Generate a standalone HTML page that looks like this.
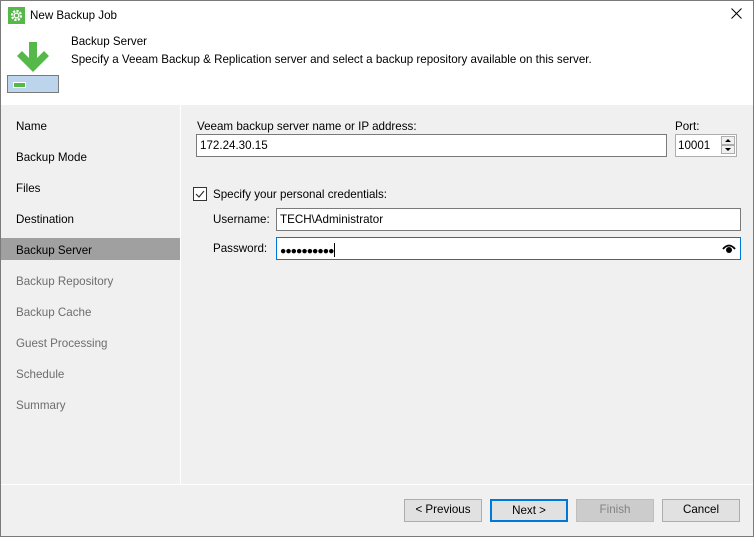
<!DOCTYPE html>
<html><head><meta charset="utf-8"><style>
*{margin:0;padding:0;box-sizing:border-box}
body{width:754px;height:537px;overflow:hidden;font-family:"Liberation Sans",sans-serif;font-size:11.6px;color:#000;background:#f0f0f0;position:relative}
.frame{position:absolute;left:0;top:0;width:754px;height:537px;border:1px solid #7a7a7a;pointer-events:none;z-index:5}
.title{position:absolute;left:0;top:0;width:754px;height:105px;background:#fff}
.abs{position:absolute;white-space:nowrap}
.left{position:absolute;left:0;top:105px;width:181px;height:379px;background:#f0f0f0;border-right:1px solid #fff}
.item{position:absolute;left:16px}
.sel{position:absolute;left:0;top:133px;width:180px;height:22px;background:#a0a0a0}
.input{position:absolute;background:#fff;border:1px solid #7a7a7a;height:23px;padding:4px 0 0 3px}
.btn{position:absolute;top:499px;width:78px;height:23px;border:1px solid #adadad;background:#e1e1e1;text-align:center;line-height:20px}
</style></head><body>
<div class="frame"></div>
<div class="title"></div>
<svg class="abs" style="left:8px;top:7px" width="17" height="17" viewBox="0 0 17 17"><rect width="17" height="17" fill="#54b948"/><circle cx="8.5" cy="8.5" r="4.5" fill="none" stroke="#fff" stroke-width="2.2" stroke-dasharray="2.2 1.3"/><circle cx="8.5" cy="8.5" r="2.3" fill="none" stroke="#fff" stroke-width="1.3"/></svg>
<div class="abs" style="left:30px;top:9px">New Backup Job</div>
<svg class="abs" style="left:731px;top:8px" width="11" height="11" viewBox="0 0 11 11"><path d="M0.5 0.5L10.5 10.5M10.5 0.5L0.5 10.5" stroke="#000" stroke-width="1"/></svg>
<div class="abs" style="left:71px;top:35px">Backup Server</div>
<div class="abs" style="left:71px;top:53px">Specify a Veeam Backup &amp; Replication server and select a backup repository available on this server.</div>
<svg class="abs" style="left:17px;top:42px" width="32" height="30" viewBox="0 0 32 30"><path d="M12 0h8v16l7-7 5 5-16 16L0 14l5-5 7 7z" fill="#54b948"/></svg>
<div class="abs" style="left:7px;top:75px;width:52px;height:18px;border:1px solid #7a7a7a;background:#bcd4ec"><div style="position:absolute;left:5px;top:6px;width:11px;height:4px;background:#54b948;border:1px solid #fff;box-sizing:content-box"></div></div>

<div class="left">
<div class="sel"></div>
<div class="item" style="top:15px">Name</div>
<div class="item" style="top:46px">Backup Mode</div>
<div class="item" style="top:77px">Files</div>
<div class="item" style="top:108px">Destination</div>
<div class="item" style="top:139px">Backup Server</div>
<div class="item" style="top:170px;color:#6d6d6d">Backup Repository</div>
<div class="item" style="top:201px;color:#6d6d6d">Backup Cache</div>
<div class="item" style="top:232px;color:#6d6d6d">Guest Processing</div>
<div class="item" style="top:263px;color:#6d6d6d">Schedule</div>
<div class="item" style="top:294px;color:#6d6d6d">Summary</div>
</div>

<div class="abs" style="left:197px;top:120px">Veeam backup server name or IP address:</div>
<div class="input" style="left:196px;top:134px;width:471px">172.24.30.15</div>
<div class="abs" style="left:675px;top:120px">Port:</div>
<div class="input" style="left:675px;top:134px;width:62px;border-color:#adadad;padding-left:2px">10001</div>
<svg class="abs" style="left:721px;top:136px" width="14" height="19" viewBox="0 0 14 19"><rect x="0.5" y="0.5" width="13" height="8" fill="#f0f0f0" stroke="#adadad"/><rect x="0.5" y="9.5" width="13" height="8" fill="#f0f0f0" stroke="#adadad"/><path d="M4 6l3-3 3 3z M4 12l3 3 3-3z" fill="#000"/></svg>

<svg class="abs" style="left:193px;top:187px" width="14" height="14" viewBox="0 0 14 14"><rect x="0.5" y="0.5" width="13" height="13" fill="#fff" stroke="#333"/><path d="M3 7l3 3 5-6" fill="none" stroke="#333" stroke-width="1.2"/></svg>
<div class="abs" style="left:213px;top:188px">Specify your personal credentials:</div>
<div class="abs" style="left:213px;top:213px">Username:</div>
<div class="input" style="left:276px;top:208px;width:465px">TECH\Administrator</div>
<div class="abs" style="left:213px;top:242px">Password:</div>
<div class="input" style="left:276px;top:237px;width:465px;border-color:#0078d7;letter-spacing:-1px;font-size:10.5px;padding-top:5px">●●●●●●●●●●<span style="display:inline-block;width:1px;height:14px;background:#000;vertical-align:-3px;margin-left:1px"></span></div>
<svg class="abs" style="left:722px;top:243px" width="14" height="11" viewBox="0 0 14 11"><path d="M1 6Q7 -1 13 6" fill="none" stroke="#000" stroke-width="1.8"/><circle cx="7" cy="7" r="3" fill="#000"/></svg>

<div class="abs" style="left:0;top:484px;width:754px;height:1px;background:#fff"></div>
<div class="btn" style="left:404px">&lt; Previous</div>
<div class="btn" style="left:490px;border:2px solid #0078d7;line-height:19px">Next &gt;</div>
<div class="btn" style="left:576px;background:#cccccc;border-color:#bfbfbf;color:#838383">Finish</div>
<div class="btn" style="left:662px">Cancel</div>
</body></html>
